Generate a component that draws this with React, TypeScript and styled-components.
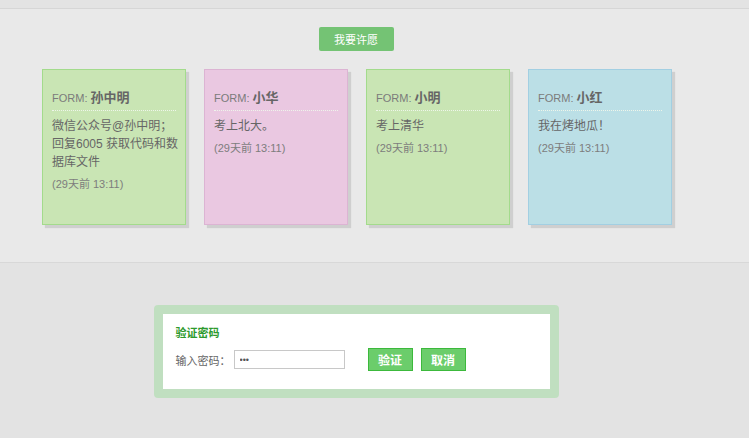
import styled, { createGlobalStyle } from "styled-components";

const GlobalStyle = createGlobalStyle`
  html, body {
    margin: 0;
    padding: 0;
    background: #e3e3e3;
    font-family: "Liberation Sans", "Noto Sans CJK SC", sans-serif;
  }
  * { box-sizing: border-box; }
`;

const TopStrip = styled.div`
  height: 9px;
  background: #e3e3e3;
  border-bottom: 1px solid #d6d6d6;
`;

const Wall = styled.section`
  height: 254px;
  background: #e9e9e9;
  border-bottom: 1px solid #d8d8d8;
`;

const Column = styled.div`
  width: 714px;
  display: flex;
  flex-direction: column;
  align-items: center;
`;

const WishButton = styled.button`
  margin: 18px 2px 0 0;
  width: 75px;
  height: 24px;
  border: none;
  border-radius: 2px;
  background: #74c374;
  color: #fff;
  font-family: inherit;
  font-size: 11px;
  padding: 0;
`;

const Cards = styled.div`
  margin-top: 18px;
  display: flex;
  gap: 18px;
`;

const palette = {
  green: { bg: "#c9e5b4", border: "#a3db8c" },
  pink: { bg: "#eac8e1", border: "#dcb4d3" },
  blue: { bg: "#bbdfe6", border: "#a2cfe2" },
};

type Tone = keyof typeof palette;

const Card = styled.div<{ $tone: Tone }>`
  width: 144px;
  height: 156px;
  padding: 17px 9px 0;
  background: ${(p) => palette[p.$tone].bg};
  border: 1px solid ${(p) => palette[p.$tone].border};
  box-shadow: 3px 3px 1px rgba(0, 0, 0, 0.11);
`;

const From = styled.div`
  height: 24px;
  padding-top: 2px;
  border-bottom: 1px dotted #eef5ea;
  color: #7b7b7b;
  font-size: 11px;
  line-height: 18px;

  b {
    color: #666;
    font-size: 13px;
    font-weight: 700;
  }
`;

const Body = styled.p`
  margin: 6px -4px 0 0;
  color: #666;
  font-size: 12px;
  line-height: 18px;
`;

const Time = styled.div`
  margin-top: 4px;
  color: #7d7d7d;
  font-size: 11px;
  line-height: 18px;
`;

const Dialog = styled.div`
  margin: 42px 2px 0 0;
  width: 405px;
  padding: 9px;
  border-radius: 4px;
  background: #c0dfc0;
`;

const DialogInner = styled.div`
  background: #fff;
  padding: 12px 13px 18px;
`;

const DialogTitle = styled.h3`
  margin: 0;
  color: #2d9a2d;
  font-size: 11px;
  font-weight: 700;
  line-height: 14px;
`;

const Row = styled.div`
  margin-top: 8px;
  display: flex;
  align-items: center;
`;

const Label = styled.label`
  width: 58px;
  color: #666;
  font-size: 11px;
`;

const PassInput = styled.input`
  width: 111px;
  height: 19px;
  border: 1px solid #c8c8c8;
  padding: 0 5px;
  font-size: 9px;
  color: #555;
  outline: none;
`;

const Actions = styled.div`
  margin-left: 23px;
  display: flex;
  gap: 8px;
`;

const ActionButton = styled.button`
  width: 45px;
  height: 23px;
  padding: 0;
  background: #6bcd6b;
  border: 1px solid #3cb93c;
  color: #fff;
  font-family: inherit;
  font-size: 12px;
  font-weight: 700;
`;

const wishes: { name: string; text: string; tone: Tone }[] = [
  { name: "孙中明", text: "微信公众号@孙中明；回复6005 获取代码和数据库文件", tone: "green" },
  { name: "小华", text: "考上北大。", tone: "pink" },
  { name: "小明", text: "考上清华", tone: "green" },
  { name: "小红", text: "我在烤地瓜！", tone: "blue" },
];

export default function App() {
  return (
    <>
      <GlobalStyle />
      <TopStrip />
      <Wall>
        <Column>
          <WishButton>我要许愿</WishButton>
          <Cards>
            {wishes.map((w) => (
              <Card key={w.name} $tone={w.tone}>
                <From>
                  FORM: <b>{w.name}</b>
                </From>
                <Body>{w.text}</Body>
                <Time>(29天前 13:11)</Time>
              </Card>
            ))}
          </Cards>
        </Column>
      </Wall>
      <Column>
        <Dialog>
          <DialogInner>
            <DialogTitle>验证密码</DialogTitle>
            <Row>
              <Label>输入密码：</Label>
              <PassInput type="password" defaultValue="123" />
              <Actions>
                <ActionButton>验证</ActionButton>
                <ActionButton>取消</ActionButton>
              </Actions>
            </Row>
          </DialogInner>
        </Dialog>
      </Column>
    </>
  );
}
